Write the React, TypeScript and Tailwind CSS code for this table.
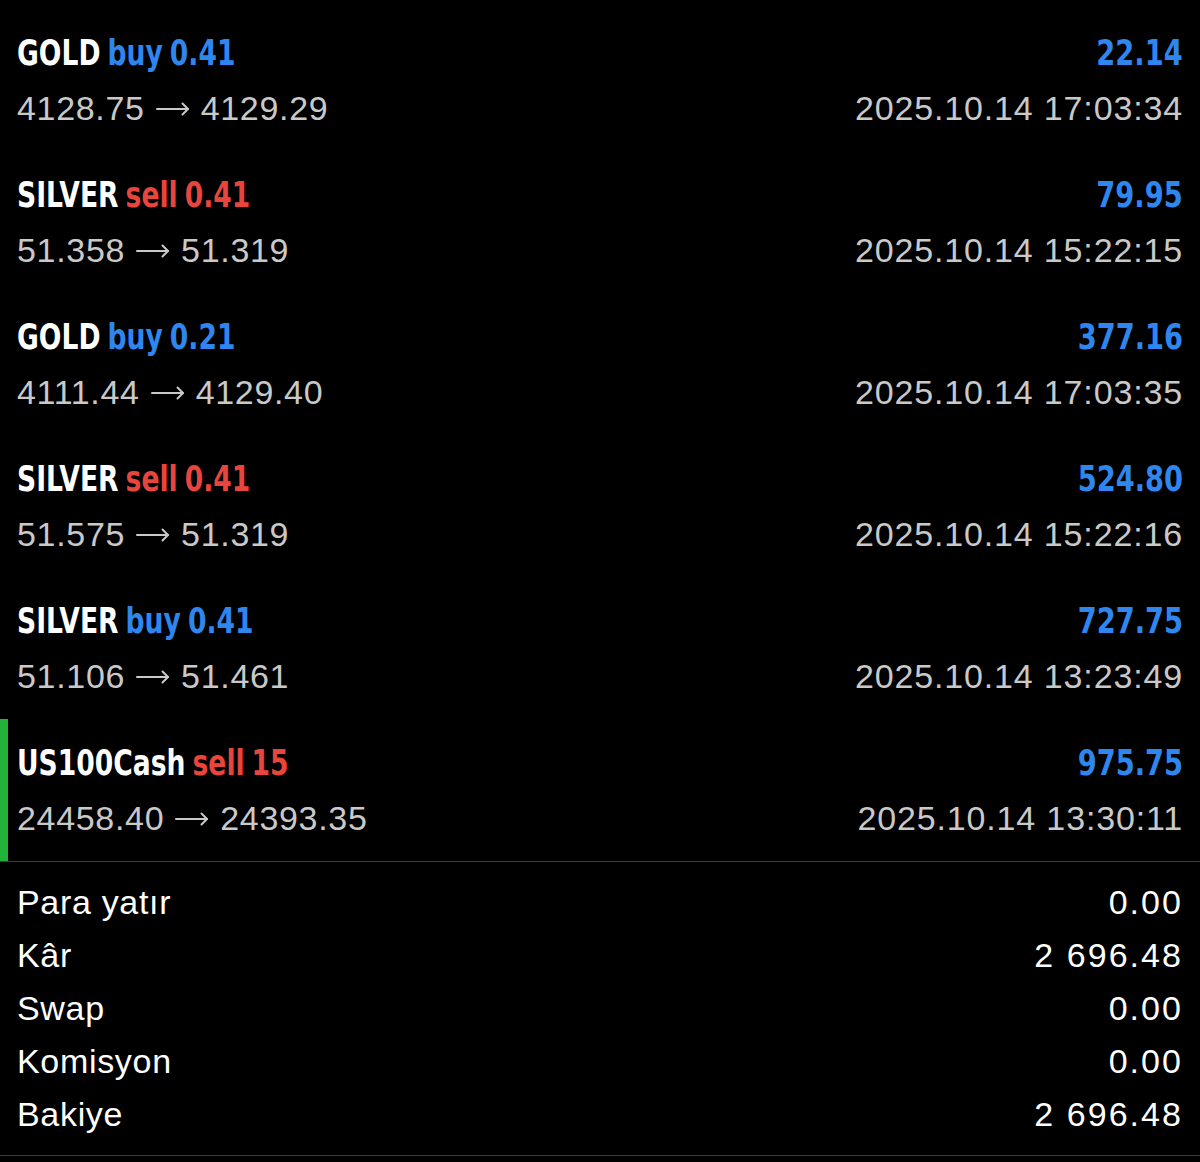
import React from "react";

type Trade = {
  sym: string;
  side: "buy" | "sell";
  vol: string;
  from: string;
  to: string;
  profit: string;
  time: string;
  active?: boolean;
};

const trades: Trade[] = [
  { sym: "GOLD", side: "buy", vol: "0.41", from: "4128.75", to: "4129.29", profit: "22.14", time: "2025.10.14 17:03:34" },
  { sym: "SILVER", side: "sell", vol: "0.41", from: "51.358", to: "51.319", profit: "79.95", time: "2025.10.14 15:22:15" },
  { sym: "GOLD", side: "buy", vol: "0.21", from: "4111.44", to: "4129.40", profit: "377.16", time: "2025.10.14 17:03:35" },
  { sym: "SILVER", side: "sell", vol: "0.41", from: "51.575", to: "51.319", profit: "524.80", time: "2025.10.14 15:22:16" },
  { sym: "SILVER", side: "buy", vol: "0.41", from: "51.106", to: "51.461", profit: "727.75", time: "2025.10.14 13:23:49" },
  { sym: "US100Cash", side: "sell", vol: "15", from: "24458.40", to: "24393.35", profit: "975.75", time: "2025.10.14 13:30:11", active: true },
];

const summary = [
  ["Para yatır", "0.00"],
  ["Kâr", "2 696.48"],
  ["Swap", "0.00"],
  ["Komisyon", "0.00"],
  ["Bakiye", "2 696.48"],
];

const cond = { fontFamily: '"DejaVu Sans", sans-serif' };
const reg = { fontFamily: '"Liberation Sans", Arial, sans-serif' };

function Arrow() {
  return (
    <svg
      width="34"
      height="14"
      viewBox="0 0 34 14"
      className="inline-block mx-[11px] align-middle relative -top-[2px]"
      fill="none"
      stroke="#c9c9c9"
      strokeWidth="2"
      strokeLinecap="round"
      strokeLinejoin="round"
    >
      <path d="M1 7H32" />
      <path d="M26.5 1.5L32 7L26.5 12.5" />
    </svg>
  );
}

export default function App() {
  return (
    <div className="w-[1200px] h-[1162px] bg-black overflow-hidden">
      <div className="h-[9px]" />
      {trades.map((t, i) => (
        <div key={i} className="relative h-[142px] flex flex-col pl-[17px] pr-[17px]">
          {t.active && <div className="absolute left-0 top-0 bottom-0 w-[8px] bg-[#22b33a]" />}
          <div className="h-[86px] pt-[23px] flex justify-between items-start">
            <div
              className="inline-block origin-left scale-x-[0.76] text-[35px] leading-[42px] font-bold text-white whitespace-nowrap [word-spacing:-3px]"
              style={cond}
            >
              {t.sym}{" "}
              <span className={t.side === "buy" ? "text-[#2e86ee]" : "text-[#e8453c]"}>
                {t.side} {t.vol}
              </span>
            </div>
            <div
              className="inline-block origin-right scale-x-[0.78] text-[35px] leading-[42px] font-bold text-[#2e86ee] whitespace-nowrap"
              style={cond}
            >
              {t.profit}
            </div>
          </div>
          <div className="flex justify-between items-start -mt-[6px]">
            <div className="text-[34px] leading-[38px] tracking-[0.02em] text-[#c9c9c9] whitespace-nowrap" style={reg}>
              {t.from}
              <Arrow />
              {t.to}
            </div>
            <div className="text-[34px] leading-[38px] tracking-[0.025em] text-[#c9c9c9]" style={reg}>
              {t.time}
            </div>
          </div>
        </div>
      ))}
      <div className="border-t border-[#3c3c3c]" />
      <div className="pt-[14px] px-[17px] flex flex-col">
        {summary.map(([k, v]) => (
          <div key={k} className="h-[53px] flex justify-between items-center text-[34px] tracking-[0.02em] text-white" style={reg}>
            <span>{k}</span>
            <span className="tracking-[0.06em]">{v}</span>
          </div>
        ))}
      </div>
      <div className="mt-[14px] border-t border-[#3c3c3c]" />
    </div>
  );
}
